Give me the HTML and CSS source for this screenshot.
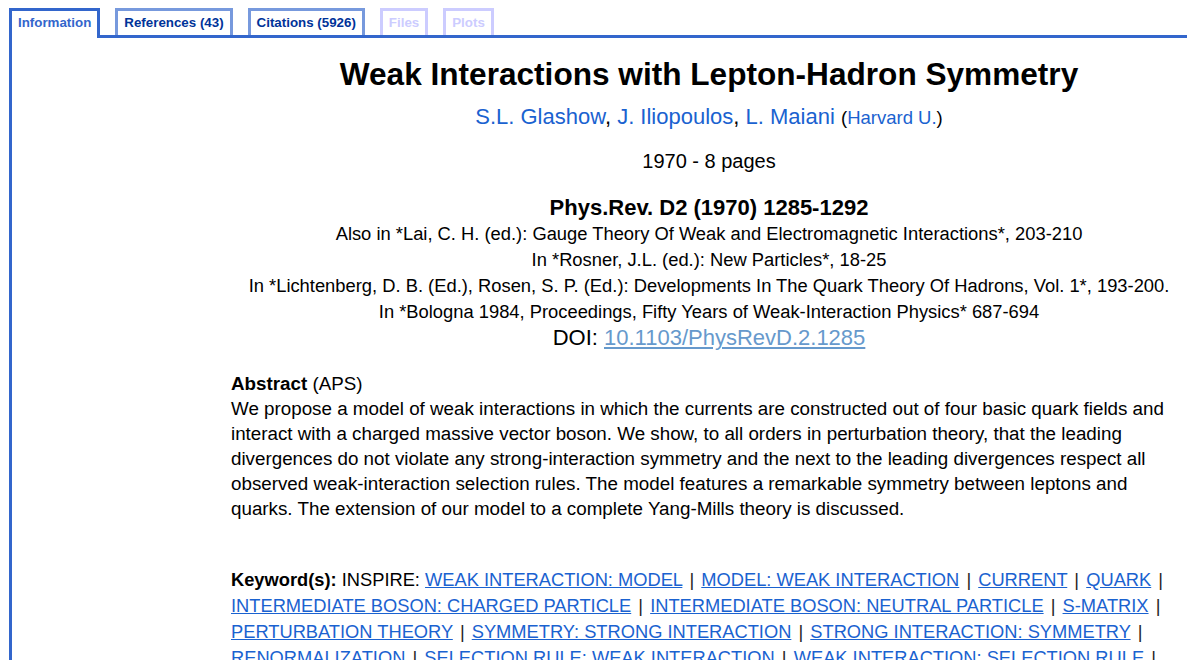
FILE: index.html
```html
<!DOCTYPE html>
<html>
<head>
<meta charset="utf-8">
<link rel="stylesheet" href="styles.css">
</head>
<body>
<div class="tabs">
  <div class="tab active">Information</div>
  <div class="tab">References (43)</div>
  <div class="tab">Citations (5926)</div>
  <div class="tab disabled">Files</div>
  <div class="tab disabled">Plots</div>
</div>
<div class="panel">
  <div class="record">
    <h1 class="title">Weak Interactions with Lepton-Hadron Symmetry</h1>
    <p class="authors"><a href="#">S.L. Glashow</a>, <a href="#">J. Iliopoulos</a>, <a href="#">L. Maiani</a> <span class="affil">(<a href="#">Harvard U.</a>)</span></p>
    <p class="date">1970 - 8 pages</p>
    <p class="journal">Phys.Rev. D2 (1970) 1285-1292</p>
    <div class="pubnotes">
      <div>Also in *Lai, C. H. (ed.): Gauge Theory Of Weak and Electromagnetic Interactions*, 203-210</div>
      <div>In *Rosner, J.L. (ed.): New Particles*, 18-25</div>
      <div>In *Lichtenberg, D. B. (Ed.), Rosen, S. P. (Ed.): Developments In The Quark Theory Of Hadrons, Vol. 1*, 193-200.</div>
      <div>In *Bologna 1984, Proceedings, Fifty Years of Weak-Interaction Physics* 687-694</div>
    </div>
    <p class="doi">DOI: <a href="#">10.1103/PhysRevD.2.1285</a></p>
    <div class="abstract">
      <div class="abs-head"><b>Abstract</b> (APS)</div>
      <p class="abs-text">We propose a model of weak interactions in which the currents are constructed out of four basic quark fields and interact with a charged massive vector boson. We show, to all orders in perturbation theory, that the leading divergences do not violate any strong-interaction symmetry and the next to the leading divergences respect all observed weak-interaction selection rules. The model features a remarkable symmetry between leptons and quarks. The extension of our model to a complete Yang-Mills theory is discussed.</p>
    </div>
    <p class="keywords"><b>Keyword(s):</b> INSPIRE: <a href="#">WEAK INTERACTION: MODEL</a> <span class="sep">|</span> <a href="#">MODEL: WEAK INTERACTION</a> <span class="sep">|</span> <a href="#">CURRENT</a> <span class="sep">|</span> <a href="#">QUARK</a> <span class="sep">|</span> <a href="#">INTERMEDIATE BOSON: CHARGED PARTICLE</a> <span class="sep">|</span> <a href="#">INTERMEDIATE BOSON: NEUTRAL PARTICLE</a> <span class="sep">|</span> <a href="#">S-MATRIX</a> <span class="sep">|</span> <a href="#">PERTURBATION THEORY</a> <span class="sep">|</span> <a href="#">SYMMETRY: STRONG INTERACTION</a> <span class="sep">|</span> <a href="#">STRONG INTERACTION: SYMMETRY</a> <span class="sep">|</span> <a href="#">RENORMALIZATION</a> <span class="sep">|</span> <a href="#">SELECTION RULE: WEAK INTERACTION</a> <span class="sep">|</span> <a href="#">WEAK INTERACTION: SELECTION RULE</a> <span class="sep">|</span></p>
  </div>
</div>
</body>
</html>
```
FILE: styles.css
```css
html, body {
  margin: 0;
  padding: 0;
  background: #fff;
  overflow: hidden;
}
body {
  padding: 8px 0 0 9px;
  font-family: "Liberation Sans", Arial, sans-serif;
  color: #000;
}
.tabs {
  display: flex;
  gap: 15px;
  align-items: flex-start;
}
.tab {
  height: 24px;
  line-height: 24px;
  padding: 0 6px;
  border: 3px solid #7799dd;
  border-bottom: none;
  font-size: 13.33px;
  font-weight: bold;
  color: #003399;
  background: #fff;
}
.tab.active {
  height: 27px;
  margin-bottom: -3px;
  border-color: #3366cc;
  color: #3366cc;
  position: relative;
  z-index: 1;
}
.tab.disabled {
  border-color: #ccccff;
  color: #ccccff;
}
.panel {
  border-top: 3px solid #3366cc;
  border-left: 3px solid #3366cc;
  height: 700px;
}
.record {
  padding-left: 219px;
  text-align: center;
}
.record a {
  color: #1a62d0;
  text-decoration: none;
}
.title {
  margin: 18px 0 0;
  font-size: 31.6px;
  line-height: 36px;
  font-weight: bold;
}
.authors {
  margin: 12px 0 0;
  font-size: 22px;
  line-height: 26px;
}
.authors .affil {
  font-size: 18.5px;
}
.date {
  margin: 18px 0 0;
  font-size: 20px;
  line-height: 24px;
}
.journal {
  margin: 22px 0 0;
  font-size: 22px;
  line-height: 26px;
  font-weight: bold;
}
.pubnotes {
  font-size: 18.35px;
  line-height: 26px;
}
.doi {
  margin: 0;
  font-size: 22px;
  line-height: 26px;
}
.doi a {
  color: #6699cc;
  text-decoration: underline;
}
.abstract {
  text-align: left;
  margin-top: 20px;
  font-size: 18.8px;
  line-height: 25px;
}
.abs-text {
  margin: 0;
  padding-right: 10px;
}
.keywords {
  text-align: left;
  margin: 46px 0 0;
  font-size: 18.3px;
  line-height: 26px;
  padding-right: 10px;
}
.keywords a {
  text-decoration: underline;
}
.sep {
  color: #222;
  padding: 0 2px;
}
```
